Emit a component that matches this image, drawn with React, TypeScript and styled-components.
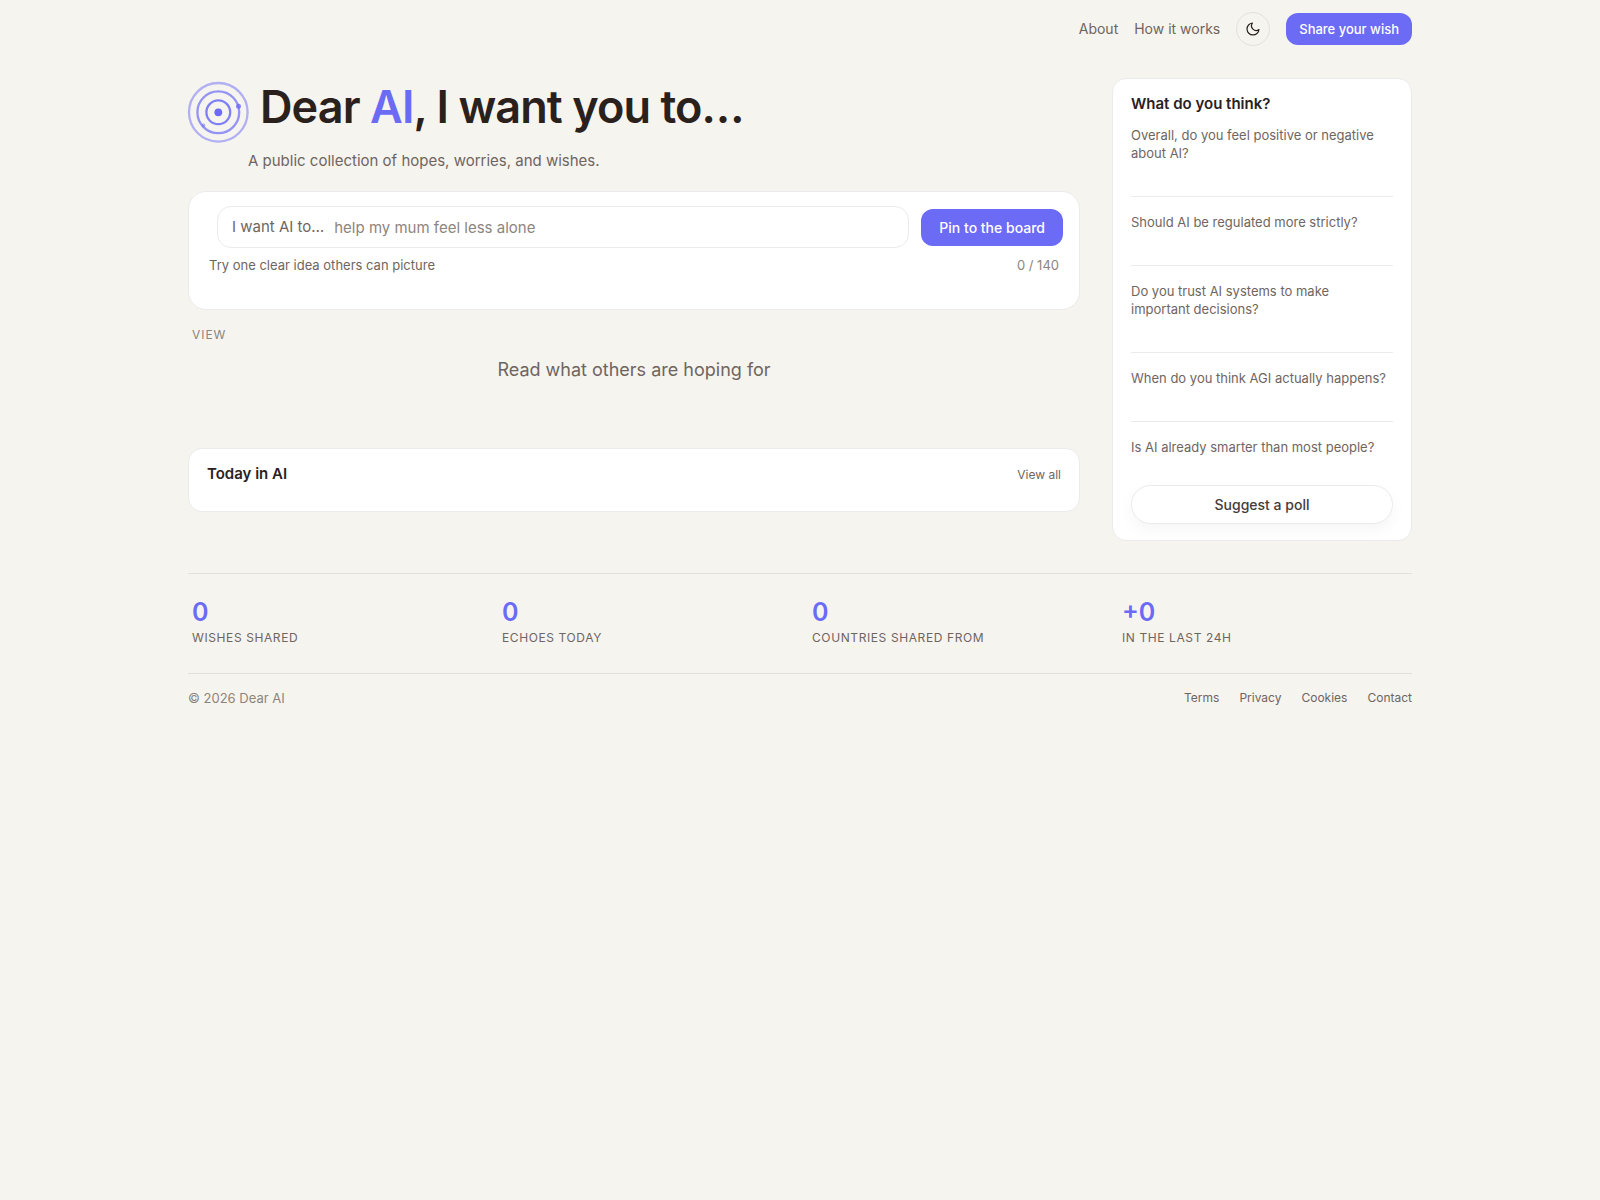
import React, { useState } from "react";
import styled, { createGlobalStyle } from "styled-components";

const color = {
  page: "#f6f4ef",
  ink: "#2a211d",
  inkSoft: "#443c37",
  muted: "#6f655f",
  faint: "#8c857d",
  accent: "#6b6bf6",
  line: "#e3e1dc",
  cardLine: "#ebebeb",
  card: "#ffffff",
};

const GlobalStyle = createGlobalStyle`
  *, *::before, *::after { box-sizing: border-box; }
  body {
    margin: 0;
    background: ${color.page};
    color: ${color.ink};
    font-family: Inter, "Liberation Sans", sans-serif;
    font-size: 15px;
    line-height: 24px;
  }
  h1, h2, p, ul, dl, dd { margin: 0; padding: 0; }
  a { color: inherit; text-decoration: none; }
  button, input { font-family: inherit; }
  button { cursor: pointer; }
`;

const Shell = styled.div`
  max-width: 1272px;
  margin: 0 auto;
  padding: 0 24px;
`;

const Header = styled.header`
  display: flex;
  justify-content: flex-end;
  align-items: center;
  padding: 12px 0;
`;

const Nav = styled.nav`
  display: flex;
  align-items: center;
  gap: 16px;
`;

const NavLink = styled.a`
  color: ${color.muted};
  font-size: 14px;
`;

const ThemeButton = styled.button`
  display: grid;
  place-items: center;
  width: 34px;
  height: 34px;
  padding: 0;
  border: 1px solid ${color.line};
  border-radius: 50%;
  background: transparent;
  color: ${color.ink};
`;

const PrimaryButton = styled.button<{ $compact?: boolean }>`
  flex: none;
  padding: ${(p) => (p.$compact ? "6px 13px" : "8px 18px")};
  border: 0;
  border-radius: 12px;
  background: ${color.accent};
  color: #fff;
  font-size: ${(p) => (p.$compact ? "13px" : "14px")};
  font-weight: 500;
  line-height: ${(p) => (p.$compact ? "20px" : "21px")};
`;

const Columns = styled.main`
  display: grid;
  grid-template-columns: minmax(0, 1fr) 300px;
  gap: 32px;
  align-items: start;
  padding: 20px 0 32px;
`;

const Hero = styled.section`
  display: grid;
  grid-template-columns: 60px 1fr;
  padding-top: 4px;
`;

const LogoMark = styled.svg`
  overflow: visible;
`;

const Title = styled.h1`
  padding-left: 12px;
  font-size: 45px;
  font-weight: 600;
  line-height: 50px;
  letter-spacing: -0.02em;
`;

const Accent = styled.span`
  color: ${color.accent};
`;

const Tagline = styled.p`
  grid-column: 2;
  padding-top: 7px;
  color: ${color.muted};
  font-size: 15px;
`;

const Card = styled.section`
  border: 1px solid ${color.cardLine};
  border-radius: 14px;
  background: ${color.card};
`;

const Composer = styled(Card).attrs({ as: "form" })`
  margin-top: 18px;
  padding: 14px 16px 34px;
  border-radius: 18px;
`;

const ComposerRow = styled.div`
  display: flex;
  align-items: center;
  gap: 12px;
  padding-left: 12px;
`;

const WishField = styled.label`
  flex: 1;
  display: flex;
  align-items: center;
  gap: 10px;
  height: 42px;
  padding: 0 14px;
  border: 1px solid ${color.cardLine};
  border-radius: 14px;
  color: ${color.muted};
`;

const WishInput = styled.input`
  flex: 1;
  min-width: 0;
  padding: 0;
  border: 0;
  outline: 0;
  background: transparent;
  color: ${color.ink};
  font-size: 15px;
  &::placeholder { color: ${color.faint}; opacity: 1; }
`;

const ComposerMeta = styled.div`
  display: flex;
  justify-content: space-between;
  padding: 8px 4px 0;
  color: ${color.muted};
  font-size: 13px;
  line-height: 19px;
`;

const Counter = styled.output`
  color: ${color.faint};
`;

const ViewLabel = styled.p`
  margin-top: 15px;
  padding-left: 4px;
  color: ${color.faint};
  font-size: 12px;
  line-height: 20px;
  letter-spacing: 0.08em;
  text-transform: uppercase;
`;

const Lead = styled.p`
  margin: 13px 0 66px;
  color: ${color.muted};
  font-size: 18px;
  text-align: center;
`;

const CardTitle = styled.h2`
  font-size: 15px;
  font-weight: 600;
  line-height: 18px;
`;

const News = styled(Card)`
  display: flex;
  justify-content: space-between;
  align-items: baseline;
  padding: 16px 18px 27px;
`;

const SmallLink = styled.a`
  color: ${color.muted};
  font-size: 12px;
  line-height: 18px;
`;

const Polls = styled(Card)`
  padding: 16px 18px;
`;

const PollList = styled.ul`
  padding: 13px 0 29px;
  list-style: none;
`;

const PollItem = styled.li`
  & + & {
    margin-top: 34px;
    padding-top: 16px;
    border-top: 1px solid ${color.cardLine};
  }
`;

const Question = styled.p`
  padding-right: 4px;
  color: ${color.muted};
  font-size: 13px;
  line-height: 18px;
`;

const SuggestButton = styled.button`
  width: 100%;
  padding: 8px 16px;
  border: 1px solid ${color.cardLine};
  border-radius: 20px;
  background: ${color.card};
  box-shadow: 0 6px 16px rgba(0, 0, 0, 0.04);
  color: ${color.inkSoft};
  font-size: 14px;
  font-weight: 500;
  line-height: 21px;
`;

const Stats = styled.dl`
  display: grid;
  grid-template-columns: repeat(4, 1fr);
  gap: 24px;
  padding: 23px 4px 25px;
  border-top: 1px solid ${color.line};
`;

const Stat = styled.div`
  display: flex;
  flex-direction: column-reverse;
`;

const StatLabel = styled.dt`
  color: ${color.muted};
  font-size: 12px;
  line-height: 20px;
  letter-spacing: 0.05em;
  text-transform: uppercase;
`;

const StatValue = styled.dd`
  color: ${color.accent};
  font-size: 25px;
  font-weight: 600;
  line-height: 31px;
`;

const Footer = styled.footer`
  display: flex;
  justify-content: space-between;
  padding: 14px 0;
  border-top: 1px solid ${color.line};
  color: ${color.faint};
  font-size: 13px;
  line-height: 20px;
`;

const FooterLinks = styled.nav`
  display: flex;
  gap: 20px;
  color: ${color.muted};
  font-size: 12px;
`;

const questions = [
  "Overall, do you feel positive or negative about AI?",
  "Should AI be regulated more strictly?",
  "Do you trust AI systems to make important decisions?",
  "When do you think AGI actually happens?",
  "Is AI already smarter than most people?",
];

const stats = [
  { value: "0", label: "Wishes shared" },
  { value: "0", label: "Echoes today" },
  { value: "0", label: "Countries shared from" },
  { value: "+0", label: "In the last 24h" },
];

const MAX_LENGTH = 140;

function Logo() {
  return (
    <LogoMark width="60" height="60" viewBox="0 0 60 60" fill="none" stroke={color.accent} strokeWidth="2.3" aria-hidden="true">
      <circle cx="30.3" cy="30.3" r="29.3" opacity="0.5" />
      <circle cx="30.3" cy="30.3" r="20.9" opacity="0.7" />
      <circle cx="30.3" cy="30.3" r="11.9" opacity="0.85" />
      <circle cx="30.3" cy="30.3" r="3.9" fill={color.accent} stroke="none" />
      <circle cx="50.5" cy="24.2" r="2.5" fill={color.accent} stroke="none" opacity="0.8" />
      <circle cx="15.5" cy="43.5" r="1.9" fill={color.accent} stroke="none" opacity="0.5" />
    </LogoMark>
  );
}

function MoonIcon() {
  return (
    <svg width="16" height="16" viewBox="0 0 24 24" fill="none" stroke="currentColor" strokeWidth="1.8" strokeLinecap="round" strokeLinejoin="round" aria-hidden="true">
      <path d="M21 12.79A9 9 0 1 1 11.21 3 7 7 0 0 0 21 12.79z" />
    </svg>
  );
}

export default function App() {
  const [wish, setWish] = useState("");

  return (
    <>
      <GlobalStyle />
      <Shell>
        <Header>
          <Nav aria-label="Main">
            <NavLink href="#about">About</NavLink>
            <NavLink href="#how">How it works</NavLink>
            <ThemeButton type="button" aria-label="Toggle dark mode">
              <MoonIcon />
            </ThemeButton>
            <PrimaryButton type="button" $compact>Share your wish</PrimaryButton>
          </Nav>
        </Header>
        <Columns>
          <div>
            <Hero>
              <Logo />
              <Title>Dear <Accent>AI</Accent>, I want you to…</Title>
              <Tagline>A public collection of hopes, worries, and wishes.</Tagline>
            </Hero>
            <Composer onSubmit={(e: React.FormEvent) => e.preventDefault()}>
              <ComposerRow>
                <WishField>
                  <span>I want AI to…</span>
                  <WishInput
                    type="text"
                    maxLength={MAX_LENGTH}
                    value={wish}
                    onChange={(e) => setWish(e.target.value)}
                    placeholder="help my mum feel less alone"
                  />
                </WishField>
                <PrimaryButton type="submit">Pin to the board</PrimaryButton>
              </ComposerRow>
              <ComposerMeta>
                <span>Try one clear idea others can picture</span>
                <Counter>{wish.length} / {MAX_LENGTH}</Counter>
              </ComposerMeta>
            </Composer>
            <ViewLabel>View</ViewLabel>
            <Lead>Read what others are hoping for</Lead>
            <News>
              <CardTitle>Today in AI</CardTitle>
              <SmallLink href="#news">View all</SmallLink>
            </News>
          </div>
          <Polls>
            <CardTitle>What do you think?</CardTitle>
            <PollList>
              {questions.map((q) => (
                <PollItem key={q}>
                  <Question>{q}</Question>
                </PollItem>
              ))}
            </PollList>
            <SuggestButton type="button">Suggest a poll</SuggestButton>
          </Polls>
        </Columns>
        <Stats>
          {stats.map((s) => (
            <Stat key={s.label}>
              <StatLabel>{s.label}</StatLabel>
              <StatValue>{s.value}</StatValue>
            </Stat>
          ))}
        </Stats>
        <Footer>
          <span>© 2026 Dear AI</span>
          <FooterLinks aria-label="Footer">
            <a href="#terms">Terms</a>
            <a href="#privacy">Privacy</a>
            <a href="#cookies">Cookies</a>
            <a href="#contact">Contact</a>
          </FooterLinks>
        </Footer>
      </Shell>
    </>
  );
}
